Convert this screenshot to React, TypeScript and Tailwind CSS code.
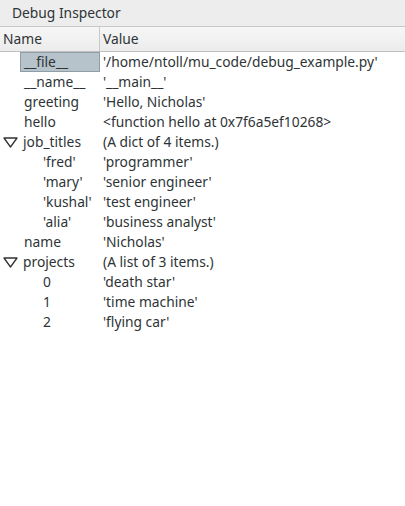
import React from "react";

type Row = { name: string; value: string; indent: 0 | 1 | 2; expand?: boolean; selected?: boolean };

const rows: Row[] = [
  { name: "__file__", value: "'/home/ntoll/mu_code/debug_example.py'", indent: 1, selected: true },
  { name: "__name__", value: "'__main__'", indent: 1 },
  { name: "greeting", value: "'Hello, Nicholas'", indent: 1 },
  { name: "hello", value: "<function hello at 0x7f6a5ef10268>", indent: 1 },
  { name: "job_titles", value: "(A dict of 4 items.)", indent: 0, expand: true },
  { name: "'fred'", value: "'programmer'", indent: 2 },
  { name: "'mary'", value: "'senior engineer'", indent: 2 },
  { name: "'kushal'", value: "'test engineer'", indent: 2 },
  { name: "'alia'", value: "'business analyst'", indent: 2 },
  { name: "name", value: "'Nicholas'", indent: 1 },
  { name: "projects", value: "(A list of 3 items.)", indent: 0, expand: true },
  { name: "0", value: "'death star'", indent: 2 },
  { name: "1", value: "'time machine'", indent: 2 },
  { name: "2", value: "'flying car'", indent: 2 },
];

function Tri() {
  return (
    <svg width="15" height="11" viewBox="0 0 15 11" className="shrink-0">
      <path d="M1 1 L14 1 L7.5 10 Z" fill="none" stroke="#333" strokeWidth="1.3" strokeLinejoin="round" />
    </svg>
  );
}

export default function App() {
  return (
    <div className="w-[405px] h-[506px] bg-white text-[13.8px] text-[#2e3436] flex flex-col" style={{ fontFamily: '"Noto Sans", sans-serif' }}>
      <div className="h-[27px] bg-[#ededed] border-b border-[#c8c8c8] flex items-center pl-[12px] shrink-0">
        Debug Inspector
      </div>
      <div className="h-[25px] flex border-b border-[#c0c0c0] bg-gradient-to-b from-[#f6f6f6] to-[#ececec] shrink-0">
        <div className="w-[100px] border-r border-[#c8c8c8] pl-[3px] flex items-center">Name</div>
        <div className="flex-1 pl-[3px] flex items-center">Value</div>
      </div>
      <div className="flex flex-col">
        {rows.map((r, i) => (
          <div key={i} className="h-[20px] flex items-center">
            <div className="w-[100px] h-full flex items-center shrink-0">
              {r.indent === 0 ? (
                <div className="flex items-center pl-[3px] gap-[5px]">
                  <Tri />
                  <span>{r.name}</span>
                </div>
              ) : r.selected ? (
                <div className="ml-[20px] w-[80px] h-full bg-[#b7c3cb] border border-[#8e9ea9] flex items-center pl-[3px]">
                  {r.name}
                </div>
              ) : (
                <span className={r.indent === 1 ? "pl-[24px]" : "pl-[43px]"}>{r.name}</span>
              )}
            </div>
            <div className="pl-[3px] whitespace-nowrap">{r.value}</div>
          </div>
        ))}
      </div>
    </div>
  );
}
